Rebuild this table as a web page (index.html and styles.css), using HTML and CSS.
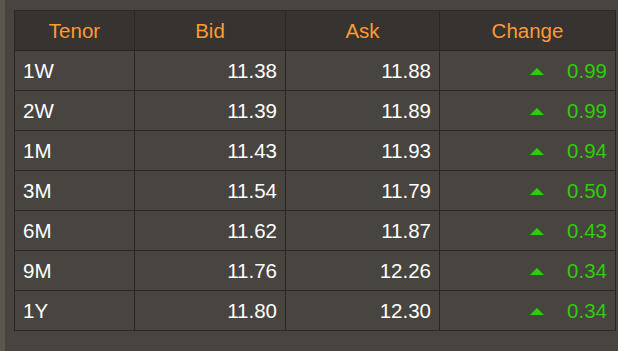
FILE: index.html
```html
<!DOCTYPE html>
<html>
<head>
<meta charset="utf-8">
<link rel="stylesheet" href="styles.css">
</head>
<body>
<div class="page">
  <table class="rates">
    <colgroup>
      <col class="c-tenor"><col class="c-bid"><col class="c-ask"><col class="c-chg">
    </colgroup>
    <thead>
      <tr><th>Tenor</th><th>Bid</th><th>Ask</th><th>Change</th></tr>
    </thead>
    <tbody>
      <tr><td class="tenor">1W</td><td class="num">11.38</td><td class="num">11.88</td><td class="chg"><span class="up"></span><span class="val">0.99</span></td></tr>
      <tr><td class="tenor">2W</td><td class="num">11.39</td><td class="num">11.89</td><td class="chg"><span class="up"></span><span class="val">0.99</span></td></tr>
      <tr><td class="tenor">1M</td><td class="num">11.43</td><td class="num">11.93</td><td class="chg"><span class="up"></span><span class="val">0.94</span></td></tr>
      <tr><td class="tenor">3M</td><td class="num">11.54</td><td class="num">11.79</td><td class="chg"><span class="up"></span><span class="val">0.50</span></td></tr>
      <tr><td class="tenor">6M</td><td class="num">11.62</td><td class="num">11.87</td><td class="chg"><span class="up"></span><span class="val">0.43</span></td></tr>
      <tr><td class="tenor">9M</td><td class="num">11.76</td><td class="num">12.26</td><td class="chg"><span class="up"></span><span class="val">0.34</span></td></tr>
      <tr><td class="tenor">1Y</td><td class="num">11.80</td><td class="num">12.30</td><td class="chg"><span class="up"></span><span class="val">0.34</span></td></tr>
    </tbody>
  </table>
</div>
</body>
</html>
```
FILE: styles.css
```css
html, body {
  margin: 0;
  padding: 0;
  background: #48443f;
  height: 100%;
}
.page {
  box-sizing: border-box;
  height: 351px;
  border-left: 5px solid #5b564e;
  padding: 10px 0 0 9px;
  font-family: "Liberation Sans", Arial, sans-serif;
  font-size: 20.5px;
}
.rates {
  border-collapse: collapse;
  table-layout: fixed;
  width: 601px;
  border: 1px solid #2a2725;
}
.c-tenor { width: 120px; }
.c-bid { width: 151px; }
.c-ask { width: 154px; }
.c-chg { width: 176px; }
.rates th, .rates td {
  border: 1px solid #2a2725;
  height: 40px;
  padding: 0 8px;
  box-sizing: border-box;
  line-height: 20px;
}
.rates th {
  background: #363330;
  color: #ff9a33;
  font-weight: normal;
  text-align: center;
}
.rates td {
  background: #48443f;
  color: #ffffff;
}
.tenor { text-align: left; }
.num { text-align: right; }
.chg { text-align: right; }
.up {
  display: inline-block;
  width: 0;
  height: 0;
  border-left: 7px solid transparent;
  border-right: 7px solid transparent;
  border-bottom: 7px solid #2ecc0a;
  vertical-align: 3px;
  margin-right: 23px;
}
.val { color: #2ecc0a; }
```
